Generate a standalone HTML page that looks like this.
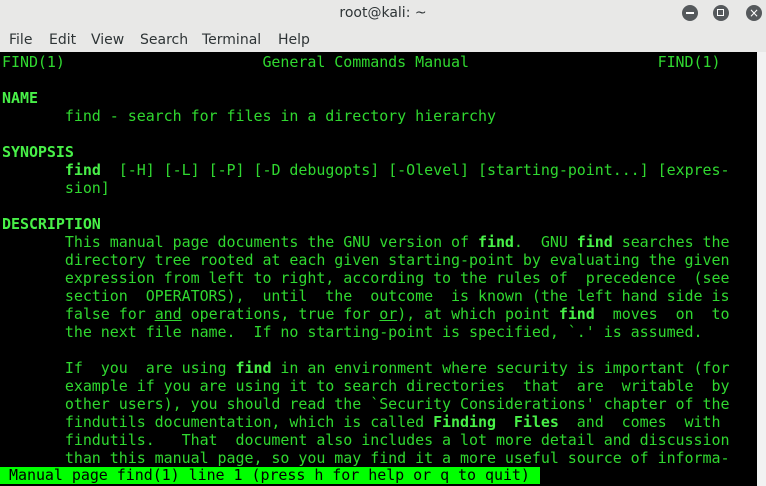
<!DOCTYPE html>
<html><head><meta charset="utf-8"><style>
html,body{margin:0;padding:0;width:766px;height:486px;overflow:hidden;background:#e8e8e7;}
#title{position:absolute;left:0;top:0;width:766px;height:28px;background:#e8e8e7;font:14px "DejaVu Sans","Liberation Sans",sans-serif;color:#2e3436;text-align:center;line-height:26px;}
.btn{position:absolute;top:5px;width:16px;height:16px;border-radius:50%;background:#55595c;}
#menu{position:absolute;left:0;top:28px;width:766px;height:24px;background:#e8e8e7;font:14px "DejaVu Sans","Liberation Sans",sans-serif;color:#2e3436;}
#menu span{position:absolute;top:4px;}
#term{position:absolute;left:0;top:52px;width:757px;height:434px;background:#000;}
#sb{position:absolute;left:757px;top:52px;width:9px;height:434px;background:#f2f2f2;}
pre{margin:0;position:absolute;left:2px;top:1px;font:15px "DejaVu Sans Mono","Liberation Mono",monospace;line-height:18px;color:#30d830;letter-spacing:-0.05px;}
b{color:#48f048;}
u{text-decoration:underline;}
#status{position:absolute;left:0;top:467px;width:540px;height:17px;background:#00ff00;}
#status pre{position:absolute;left:9px;top:-1px;color:#000;}
</style></head><body>
<div id="title">root@kali: ~
<div class="btn" style="left:682px"><div style="position:absolute;left:4px;top:7px;width:8px;height:2px;background:#fff"></div></div>
<div class="btn" style="left:713px"><div style="position:absolute;left:4px;top:4px;width:5px;height:5px;border:1.5px solid #fff"></div></div>
<div class="btn" style="left:746px;color:#fff;font-size:12px;line-height:16px;text-align:center">×</div>
</div>
<div id="menu"><span style="left:9px">File</span><span style="left:49px">Edit</span><span style="left:91px">View</span><span style="left:140px">Search</span><span style="left:202px">Terminal</span><span style="left:278px">Help</span></div>
<div id="term"><pre>FIND(1)                      General Commands Manual                     FIND(1)

<b>NAME</b>
       find - search for files in a directory hierarchy

<b>SYNOPSIS</b>
       <b>find</b>  [-H] [-L] [-P] [-D debugopts] [-Olevel] [starting-point...] [expres-
       sion]

<b>DESCRIPTION</b>
       This manual page documents the GNU version of <b>find</b>.  GNU <b>find</b> searches the
       directory tree rooted at each given starting-point by evaluating the given
       expression from left to right, according to the rules of  precedence  (see
       section  OPERATORS),  until  the  outcome  is known (the left hand side is
       false for <u>and</u> operations, true for <u>or</u>), at which point <b>find</b>  moves  on  to
       the next file name.  If no starting-point is specified, `.' is assumed.

       If  you  are using <b>find</b> in an environment where security is important (for
       example if you are using it to search directories  that  are  writable  by
       other users), you should read the `Security Considerations' chapter of the
       findutils documentation, which is called <b>Finding  Files</b>  and  comes  with
       findutils.   That  document also includes a lot more detail and discussion
       than this manual page, so you may find it a more useful source of informa-</pre>
</div>
<div id="sb"></div>
<div id="status"><pre>Manual page find(1) line 1 (press h for help or q to quit)</pre></div>
</body></html>
